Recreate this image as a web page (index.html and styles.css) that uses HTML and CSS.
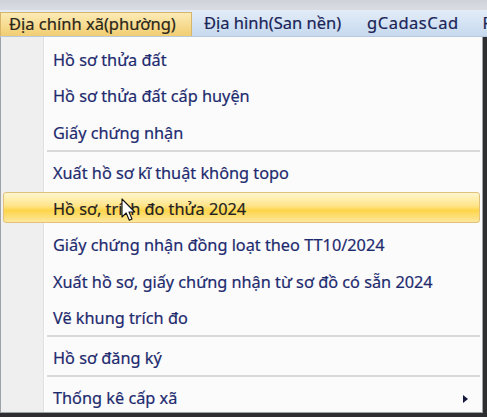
FILE: index.html
```html
<!DOCTYPE html>
<html>
<head>
<meta charset="utf-8">
<link rel="stylesheet" href="styles.css">
</head>
<body>
<div class="screen">
  <div class="topstrip"></div>
  <div class="menubar">
    <div class="mb-item active">Địa chính xã(phường)</div>
    <div class="mb-item">Địa hình(San nền)</div>
    <div class="mb-item wide">gCadasCad</div>
    <div class="mb-item">P</div>
  </div>
  <div class="popup">
    <div class="gutter"></div>
    <div class="items">
      <div class="item">Hồ sơ thửa đất</div>
      <div class="item">Hồ sơ thửa đất cấp huyện</div>
      <div class="item">Giấy chứng nhận</div>
      <div class="sep"></div>
      <div class="item">Xuất hồ sơ kĩ thuật không topo</div>
      <div class="item hot"><span class="hl"></span><span class="label">Hồ sơ, trích đo thửa 2024</span></div>
      <div class="item">Giấy chứng nhận đồng loạt theo TT10/2024</div>
      <div class="item">Xuất hồ sơ, giấy chứng nhận từ sơ đồ có sẵn 2024</div>
      <div class="item">Vẽ khung trích đo</div>
      <div class="sep"></div>
      <div class="item">Hồ sơ đăng ký</div>
      <div class="sep"></div>
      <div class="item sub">Thống kê cấp xã<span class="arrow"></span></div>
    </div>
    <svg class="cursor" width="15" height="24" viewBox="0 0 15 24">
      <path d="M1 1 L1 19 L5.2 15 L8.3 22.2 L11 21 L8 14 L13.8 14 Z" fill="#fff" stroke="#111" stroke-width="1.1" stroke-linejoin="round"/>
    </svg>
  </div>
</div>
</body>
</html>
```
FILE: styles.css
```css
html, body {
  margin: 0;
  padding: 0;
}
body {
  width: 487px;
  height: 417px;
  overflow: hidden;
  background: #2e2e30;
  font-family: "Noto Sans", "Open Sans", sans-serif;
}
.screen {
  width: 487px;
  height: 417px;
  display: flex;
  flex-direction: column;
}
.topstrip {
  height: 10px;
  background: linear-gradient(#cfd3d9, #d9dde2);
}
.menubar {
  height: 27px;
  display: flex;
  align-items: stretch;
  overflow: hidden;
  background: linear-gradient(#e3ecf7, #d3e2f3 55%, #c7d9ee);
  border-bottom: 1px solid #b9c9dd;
  box-sizing: border-box;
  font-size: 16.5px;
  color: #1a2457;
  -webkit-text-stroke: 0.2px currentColor;
}
.mb-item {
  flex: none;
  display: flex;
  align-items: center;
  padding: 0 12px;
  white-space: nowrap;
  line-height: 1;
}
.mb-item.wide {
  padding: 0 12px 0 14px;
  letter-spacing: 0.5px;
}
.mb-item.active {
  padding: 0 6px 0 8px;
  width: 192px;
  box-sizing: border-box;
  margin-top: 2px;
  background: linear-gradient(#fcebb6, #f6d98c 60%, #f1cd72);
  border: 1px solid #d8b669;
  border-bottom: none;
  color: #2a2618;
}
.popup {
  position: relative;
  width: 483px;
  height: 376px;
  box-sizing: border-box;
  border: 1px solid #9ea3a8;
  border-top: none;
  background: #fbfbfb;
  display: flex;
  overflow: hidden;
}
.gutter {
  width: 42px;
  flex: none;
  background: #efeff0;
  border-right: 1px solid #dfe0e1;
  box-shadow: 1px 0 0 #ffffff;
}
.items {
  flex: 1;
  padding-top: 5px;
  display: flex;
  flex-direction: column;
}
.item {
  position: relative;
  height: 36.25px;
  flex: none;
  display: flex;
  align-items: center;
  padding-left: 9px;
  font-size: 16.3px;
  color: #1d2a6e;
  -webkit-text-stroke: 0.2px currentColor;
  white-space: nowrap;
}
.sep {
  height: 4px;
  flex: none;
  margin-left: 3px;
  margin-right: 2px;
  box-sizing: border-box;
  border-top: 2px solid #d9d9d9;
  border-bottom: 2px solid #fbfbfb;
  margin-top: -1px;
  margin-bottom: 1px;
}
.hl {
  position: absolute;
  left: -41px;
  right: 2px;
  top: 1px;
  bottom: 4px;
  border: 1px solid #e2c27a;
  border-radius: 3px;
  background: linear-gradient(#fff6cf, #ffe487 45%, #fdd54a 60%, #fde79e);
}
.label {
  position: relative;
  color: #1f1f1f;
}
.arrow {
  position: absolute;
  right: 14px;
  top: 15px;
  width: 0;
  height: 0;
  border-top: 4px solid transparent;
  border-bottom: 4px solid transparent;
  border-left: 5px solid #14193d;
}
.cursor {
  position: absolute;
  left: 120px;
  top: 161px;
}
```
